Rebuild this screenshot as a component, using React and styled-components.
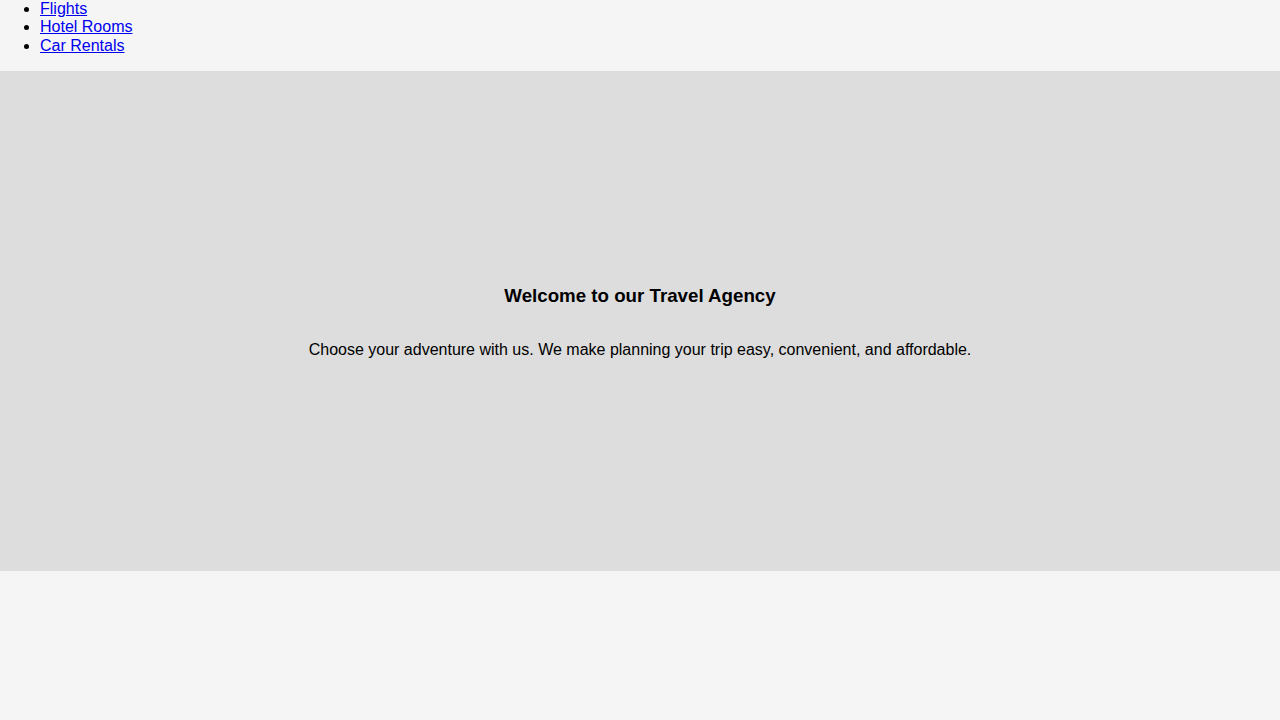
import React from "react";
import styled, { createGlobalStyle } from "styled-components";

const GlobalStyle = createGlobalStyle`
  html, body {
    margin: 0;
    padding: 0;
    background: #f5f5f5;
    font-family: "Liberation Sans", Arial, sans-serif;
    line-height: 1.15;
    color: #000;
  }
`;

const Nav = styled.nav``;

const NavList = styled.ul`
  margin: 0 0 16px;
  padding-left: 40px;
  list-style: disc;
  font-size: 16px;
`;

const NavItem = styled.li``;

const NavLink = styled.a`
  color: #0000ee;
  text-decoration: underline;
`;

const Hero = styled.section`
  height: 500px;
  background: #dddddd;
  display: flex;
  flex-direction: column;
  justify-content: center;
  align-items: center;
  text-align: center;
`;

const Title = styled.h3`
  font-size: 18.72px;
  font-weight: bold;
  margin: 18.72px 0;
`;

const Lead = styled.p`
  font-size: 16px;
  margin: 16px 0;
`;

export default function App() {
  return (
    <>
      <GlobalStyle />
      <Nav>
        <NavList>
          <NavItem><NavLink href="#">Flights</NavLink></NavItem>
          <NavItem><NavLink href="#">Hotel Rooms</NavLink></NavItem>
          <NavItem><NavLink href="#">Car Rentals</NavLink></NavItem>
        </NavList>
      </Nav>
      <Hero>
        <Title>Welcome to our Travel Agency</Title>
        <Lead>
          Choose your adventure with us. We make planning your trip easy, convenient, and affordable.
        </Lead>
      </Hero>
    </>
  );
}
